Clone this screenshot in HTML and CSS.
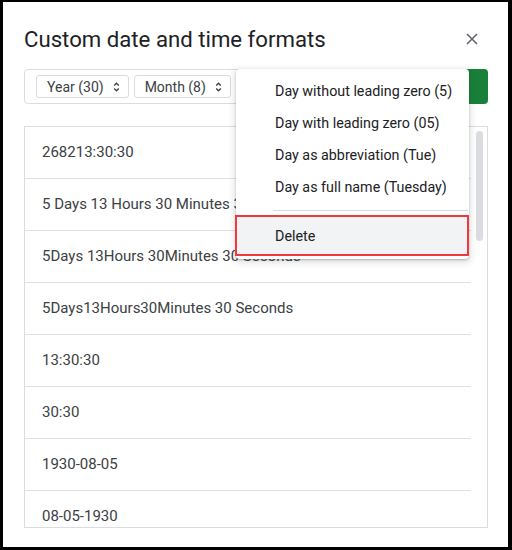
FILE: index.html
```html
<!DOCTYPE html>
<html lang="en">
<head>
<meta charset="utf-8">
<title>Custom date and time formats</title>
<link rel="stylesheet" href="styles.css">
</head>
<body>
<div class="frame">
  <div class="dialog">
    <div class="header">
      <h1 class="title">Custom date and time formats</h1>
      <button class="close" aria-label="Close">
        <svg width="12" height="12" viewBox="0 0 12 12"><path d="M1 1 L11 11 M11 1 L1 11" stroke="#5f6368" stroke-width="1.5" fill="none"/></svg>
      </button>
    </div>
    <div class="toolbar">
      <div class="format-input">
        <span class="chip">Year (30)
          <svg class="updown" width="7" height="12" viewBox="0 0 7 12"><path d="M1.2 4.5 L3.5 2.2 L5.8 4.5 M1.2 7.5 L3.5 9.8 L5.8 7.5" stroke="#3c4043" stroke-width="1.3" fill="none"/></svg>
        </span>
        <span class="chip">Month (8)
          <svg class="updown" width="7" height="12" viewBox="0 0 7 12"><path d="M1.2 4.5 L3.5 2.2 L5.8 4.5 M1.2 7.5 L3.5 9.8 L5.8 7.5" stroke="#3c4043" stroke-width="1.3" fill="none"/></svg>
        </span>
      </div>
      <button class="apply" aria-label="Apply"></button>
    </div>
    <div class="list">
      <div class="rows">
        <div class="row">268213:30:30</div>
        <div class="row">5 Days 13 Hours 30 Minutes 30 Seconds</div>
        <div class="row">5Days 13Hours 30Minutes 30 Seconds</div>
        <div class="row">5Days13Hours30Minutes 30 Seconds</div>
        <div class="row">13:30:30</div>
        <div class="row">30:30</div>
        <div class="row">1930-08-05</div>
        <div class="row">08-05-1930</div>
      </div>
      <div class="scrolltrack"><div class="thumb"></div></div>
    </div>
  </div>

  <div class="menu">
    <div class="menu-item">Day without leading zero (5)</div>
    <div class="menu-item">Day with leading zero (05)</div>
    <div class="menu-item">Day as abbreviation (Tue)</div>
    <div class="menu-item">Day as full name (Tuesday)</div>
    <div class="menu-sep"></div>
    <div class="menu-item delete">Delete</div>
  </div>
</div>
</body>
</html>
```

FILE: styles.css
```css
* { box-sizing: border-box; }

html, body {
  margin: 0;
  padding: 0;
  background: #ffffff;
}

body {
  font-family: Roboto, "Liberation Sans", Arial, sans-serif;
  color: #3c4043;
}

.frame {
  position: relative;
  width: 512px;
  height: 550px;
  border-style: solid;
  border-color: #000;
  border-width: 2px 4px 3px 3px;
  background: #fff;
  overflow: hidden;
}

.dialog {
  padding: 23px 20px 0 21px;
}

.header {
  display: flex;
  align-items: center;
  justify-content: space-between;
  height: 28px;
}

.title {
  margin: 0;
  font-size: 22.2px;
  line-height: 28px;
  font-weight: 400;
  color: #202124;
}

.close {
  width: 24px;
  height: 24px;
  margin-right: 4px;
  padding: 0;
  border: 0;
  background: transparent;
  display: flex;
  align-items: center;
  justify-content: center;
}

.toolbar {
  display: flex;
  gap: 8px;
  margin-top: 16px;
  height: 35px;
}

.format-input {
  flex: 1;
  display: flex;
  align-items: center;
  gap: 5px;
  padding: 0 11px;
  border: 1px solid #dadce0;
  border-radius: 4px;
}

.chip {
  display: inline-flex;
  align-items: center;
  gap: 9px;
  height: 23px;
  padding: 0 8px 0 10px;
  border: 1px solid #dadce0;
  border-radius: 3px;
  font-size: 14px;
  color: #3c4043;
  white-space: nowrap;
}

.apply {
  width: 72px;
  border: 0;
  border-radius: 4px;
  background: #188038;
}

.list {
  display: flex;
  margin-top: 22px;
  height: 402px;
  border: 1px solid #dadce0;
  overflow: hidden;
}

.rows {
  flex: 1;
  overflow: hidden;
}

.row {
  height: 52px;
  display: flex;
  align-items: center;
  padding-left: 17px;
  padding-bottom: 1px;
  border-bottom: 1px solid #e0e0e0;
  font-size: 15px;
  color: #3c4043;
  white-space: nowrap;
}

.scrolltrack {
  width: 16px;
  padding: 4px 4px 0 5px;
}

.thumb {
  width: 7px;
  height: 110px;
  border-radius: 4px;
  background: #dadce0;
}

.menu {
  position: absolute;
  left: 233px;
  top: 67px;
  width: 233px;
  height: 190px;
  padding-top: 6px;
  background: #fff;
  border-radius: 4px;
  box-shadow: 0 2px 6px 2px rgba(60, 64, 67, 0.15), 0 1px 2px rgba(60, 64, 67, 0.3);
}

.menu-item {
  height: 32px;
  display: flex;
  align-items: center;
  padding-left: 39px;
  font-size: 14.3px;
  color: #202124;
  white-space: nowrap;
}

.menu-sep {
  height: 1px;
  margin: 7px 1px 4px 37px;
  background: #dadce0;
}

.menu-item.delete {
  height: 41px;
  margin-left: -1px;
  padding-left: 38px;
  background: #f1f3f4;
  border: 2px solid #f0393c;
}
```
